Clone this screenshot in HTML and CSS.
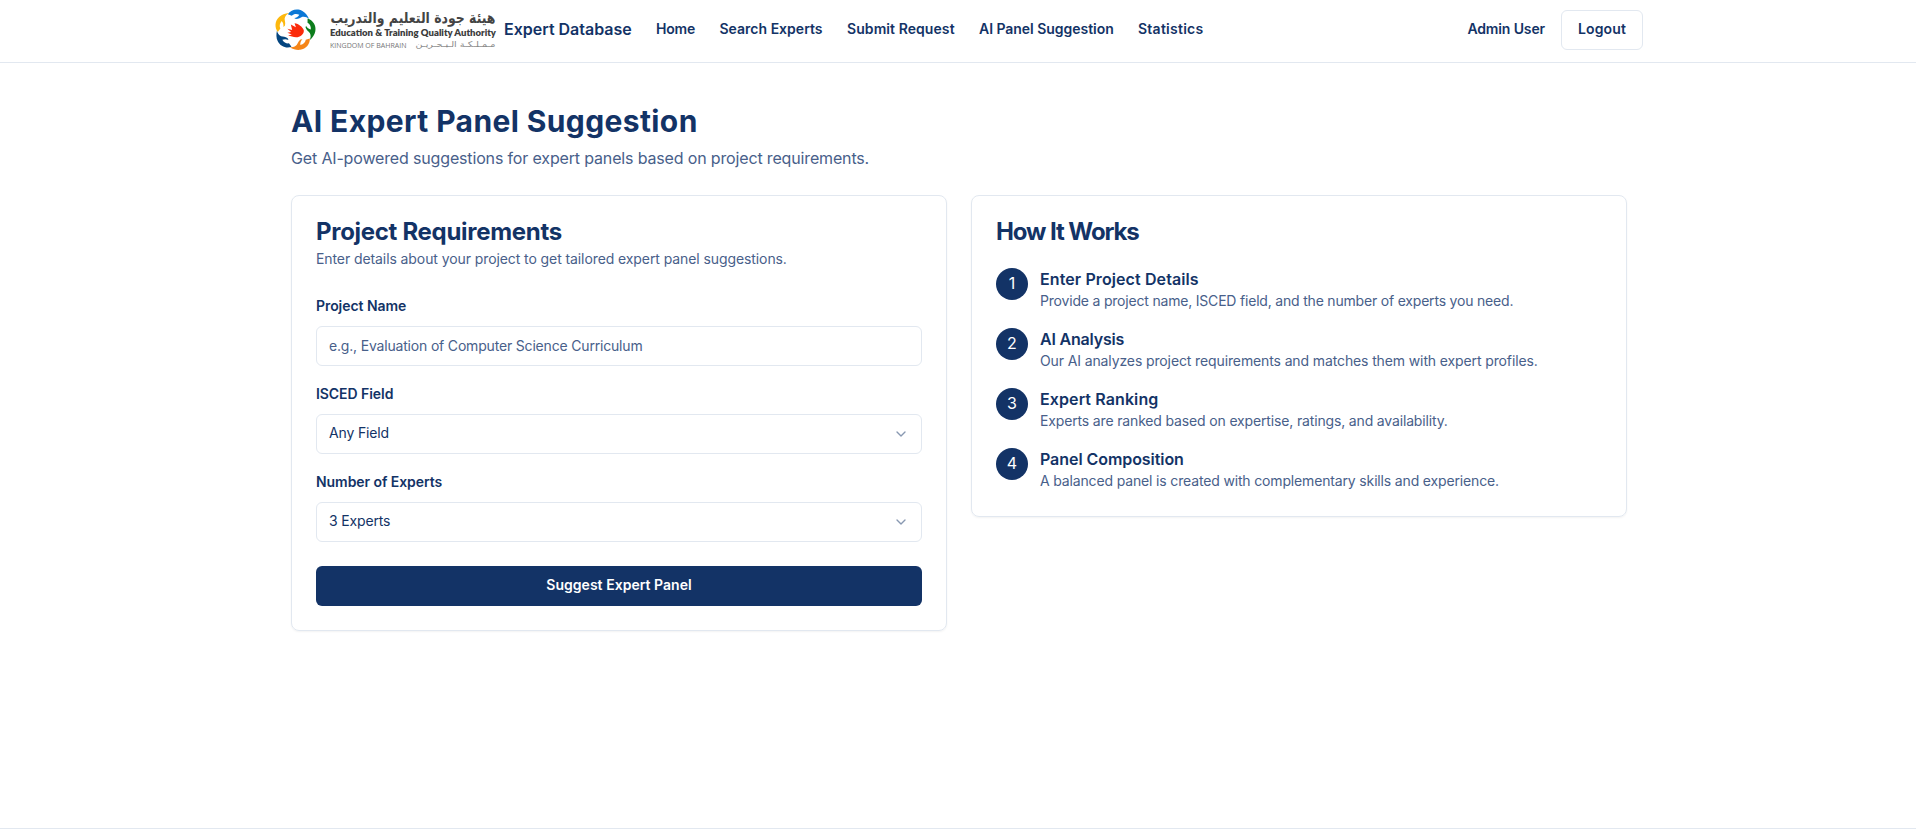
FILE: index.html
```html
<!DOCTYPE html>
<html lang="en">
<head>
<meta charset="utf-8">
<title>Expert Database</title>
<link rel="stylesheet" href="styles.css">
</head>
<body>
<header class="header">
  <div class="header-inner">
    <svg class="logo" width="222" height="44" viewBox="0 0 222 44" role="img" aria-label="Education &amp; Training Quality Authority">
      <defs>
        <path id="hand" d="M-21-46C-12-59 6-65 22-56C31-51 37-43 42-32C35-38 30-40 22-39C16-37 12-32 3-32L-2-35C5-36 10-40 13-45C4-49-4-47-9-42Z"/>
      </defs>
      <g transform="translate(19.900 22) scale(.340)">
        <use href="#hand" fill="#0a78d6"/>
        <use href="#hand" fill="#0c7d1c" transform="rotate(72)"/>
        <use href="#hand" fill="#f58518" transform="rotate(144)"/>
        <use href="#hand" fill="#04457f" transform="rotate(216)"/>
        <use href="#hand" fill="#fdb80e" transform="rotate(288)"/>
        <path fill="#fb2a0a" d="M-12-16L3-8L-1-20C11-18 22-10 26 0C28 10 19 19 8 21C-3 23-11 17-20 16L-9 13L-22 8L-11 6L-22-4L-8 0Z"/>
      </g>
      <text class="logo-ar" x="220.500" y="14.500" textLength="165" lengthAdjust="spacingAndGlyphs" direction="rtl">هيئة جودة التعليم والتدريب</text>
      <text class="logo-en" x="55" y="28.400" textLength="166" lengthAdjust="spacingAndGlyphs">Education &amp; Training Quality Authority</text>
      <text class="logo-sub" x="55" y="39.800" textLength="76.500" lengthAdjust="spacingAndGlyphs">KINGDOM OF BAHRAIN</text>
      <text class="logo-sub-ar" x="220.500" y="38.800" textLength="80" lengthAdjust="spacingAndGlyphs" direction="rtl">مـمـلـكـة الـبـحـريـن</text>
    </svg>
    <span class="brand">Expert Database</span>
    <nav class="nav">
      <a class="nav-home">Home</a>
      <a class="nav-search">Search Experts</a>
      <a class="nav-submit">Submit Request</a>
      <a class="nav-panel">AI Panel Suggestion</a>
      <a class="nav-stats">Statistics</a>
    </nav>
    <span class="user">Admin User</span>
    <button class="logout">Logout</button>
  </div>
</header>
<main class="main">
  <h1 class="title">AI Expert Panel Suggestion</h1>
  <p class="subtitle">Get AI-powered suggestions for expert panels based on project requirements.</p>
  <div class="grid">
    <section class="card">
      <h2 class="card-title">Project Requirements</h2>
      <p class="card-desc">Enter details about your project to get tailored expert panel suggestions.</p>
      <form class="form">
        <div class="field">
          <label class="label">Project Name</label>
          <div class="control placeholder">e.g., Evaluation of Computer Science Curriculum</div>
        </div>
        <div class="field">
          <label class="label">ISCED Field</label>
          <div class="control"><span>Any Field</span><svg class="chevron" viewBox="0 0 24 24"><path d="m6 9 6 6 6-6"/></svg></div>
        </div>
        <div class="field">
          <label class="label">Number of Experts</label>
          <div class="control"><span>3 Experts</span><svg class="chevron" viewBox="0 0 24 24"><path d="m6 9 6 6 6-6"/></svg></div>
        </div>
        <button type="button" class="submit">Suggest Expert Panel</button>
      </form>
    </section>
    <section class="card">
      <h2 class="card-title how">How It Works</h2>
      <ol class="steps">
        <li class="step"><span class="num">1</span><div><h3 class="step-title">Enter Project Details</h3><p class="step-text first">Provide a project name, ISCED field, and the number of experts you need.</p></div></li>
        <li class="step"><span class="num">2</span><div><h3 class="step-title tight">AI Analysis</h3><p class="step-text second">Our AI analyzes project requirements and matches them with expert profiles.</p></div></li>
        <li class="step"><span class="num">3</span><div><h3 class="step-title">Expert Ranking</h3><p class="step-text">Experts are ranked based on expertise, ratings, and availability.</p></div></li>
        <li class="step"><span class="num">4</span><div><h3 class="step-title mid">Panel Composition</h3><p class="step-text">A balanced panel is created with complementary skills and experience.</p></div></li>
      </ol>
    </section>
  </div>
</main>
<footer class="footer"></footer>
</body>
</html>
```
FILE: styles.css
```css
:root {
  --navy: #133366;
  --muted: #48608a;
  --border: #e2e8f0;
  --medium: 580;
}
* { box-sizing: border-box; margin: 0; padding: 0; }
body {
  height: 831px;
  overflow: hidden;
  display: flex;
  flex-direction: column;
  background: #fff;
  color: var(--navy);
  font: 400 14px/20px Inter, "Liberation Sans", sans-serif;
}
button { font: inherit; color: inherit; }
.header { height: 63px; border-bottom: 1px solid var(--border); flex: none; }
.header-inner {
  width: 1368px;
  height: 60px;
  margin-left: 275px;
  display: flex;
  align-items: center;
  font-weight: var(--medium);
}
.logo { display: block; margin-right: 7px; overflow: visible; }
.logo-ar { font: 700 15px "DejaVu Sans", sans-serif; fill: #444; }
.logo-en { font: 800 9.300px Lato, sans-serif; fill: #3d3d3d; }
.logo-sub { font: 400 6.800px "Open Sans", sans-serif; fill: #777; }
.logo-sub-ar { font: 400 8px "DejaVu Sans", sans-serif; fill: #888; }
.brand { width: 152px; font-size: 16px; line-height: 24px; letter-spacing: 0; position: relative; top: -1px; }
.nav { display: flex; gap: 24px; position: relative; top: -1px; white-space: nowrap; }
.nav-home { width: 39.500px; letter-spacing: -.200px; }
.nav-search { width: 103.500px; letter-spacing: .010px; }
.nav-submit { width: 108px; letter-spacing: .075px; }
.nav-panel { width: 135px; letter-spacing: -.040px; }
.nav-stats { letter-spacing: .250px; }
.user { margin-left: auto; margin-right: 16px; letter-spacing: -.130px; position: relative; top: -1px; }
.logout {
  width: 82px;
  height: 40px;
  padding-bottom: 2px;
  border: 1px solid var(--border);
  border-radius: 6px;
  background: #fff;
  font-weight: var(--medium);
  letter-spacing: .110px;
}
.main { width: 1336px; margin: 40px 0 0 291px; flex: 1; }
.title { font-size: 30px; line-height: 36px; font-weight: 750; letter-spacing: .390px; }
.subtitle { margin: 7px 0 25px; font-size: 16px; line-height: 24px; letter-spacing: -.155px; color: var(--muted); }
.grid { display: grid; grid-template-columns: 1fr 1fr; gap: 24px; align-items: start; }
.card {
  padding: 24px;
  border: 1px solid var(--border);
  border-radius: 8px;
  box-shadow: 0 1px 2px rgba(0, 0, 0, .05);
}
.card-title { font-size: 24px; line-height: 24px; font-weight: 660; letter-spacing: -.300px; }
.card-title.how { letter-spacing: -1.100px; }
.card-desc { margin-top: 5px; letter-spacing: -.090px; color: var(--muted); }
.form { margin-top: 25px; display: flex; flex-direction: column; gap: 16px; }
.field { display: flex; flex-direction: column; gap: 8px; }
.label { line-height: 24px; font-weight: var(--medium); letter-spacing: -.060px; }
.control {
  height: 40px;
  padding: 0 12px;
  display: flex;
  align-items: center;
  justify-content: space-between;
  border: 1px solid var(--border);
  border-radius: 6px;
  letter-spacing: -.150px;
}
.control span { position: relative; top: -1px; }
.placeholder { color: var(--muted); letter-spacing: -.181px; }
.chevron { width: 16px; height: 16px; fill: none; stroke: currentColor; stroke-width: 2; stroke-linecap: round; stroke-linejoin: round; opacity: .5; }
.submit {
  height: 40px;
  margin-top: 8px;
  padding-bottom: 2px;
  border: 0;
  border-radius: 6px;
  background: var(--navy);
  color: #fff;
  font-weight: var(--medium);
  letter-spacing: .030px;
}
.steps { margin-top: 24px; list-style: none; display: flex; flex-direction: column; gap: 16px; }
.step { display: flex; gap: 12px; }
.num {
  width: 32px;
  height: 32px;
  flex: none;
  border-radius: 50%;
  background: var(--navy);
  color: #fff;
  font-size: 16px;
  line-height: 31px;
  text-align: center;
}
.step-title { height: 24px; font-size: 16px; line-height: 22px; font-weight: var(--medium); letter-spacing: .100px; }
.step-title.tight { letter-spacing: -.190px; }
.step-title.mid { letter-spacing: -.060px; }
.step-text { margin: -1px 0 1px; letter-spacing: -.155px; color: var(--muted); }
.step-text.first { letter-spacing: -.195px; }
.step-text.second { letter-spacing: -.120px; }
.footer { height: 3px; flex: none; border-top: 1px solid var(--border); }
```
